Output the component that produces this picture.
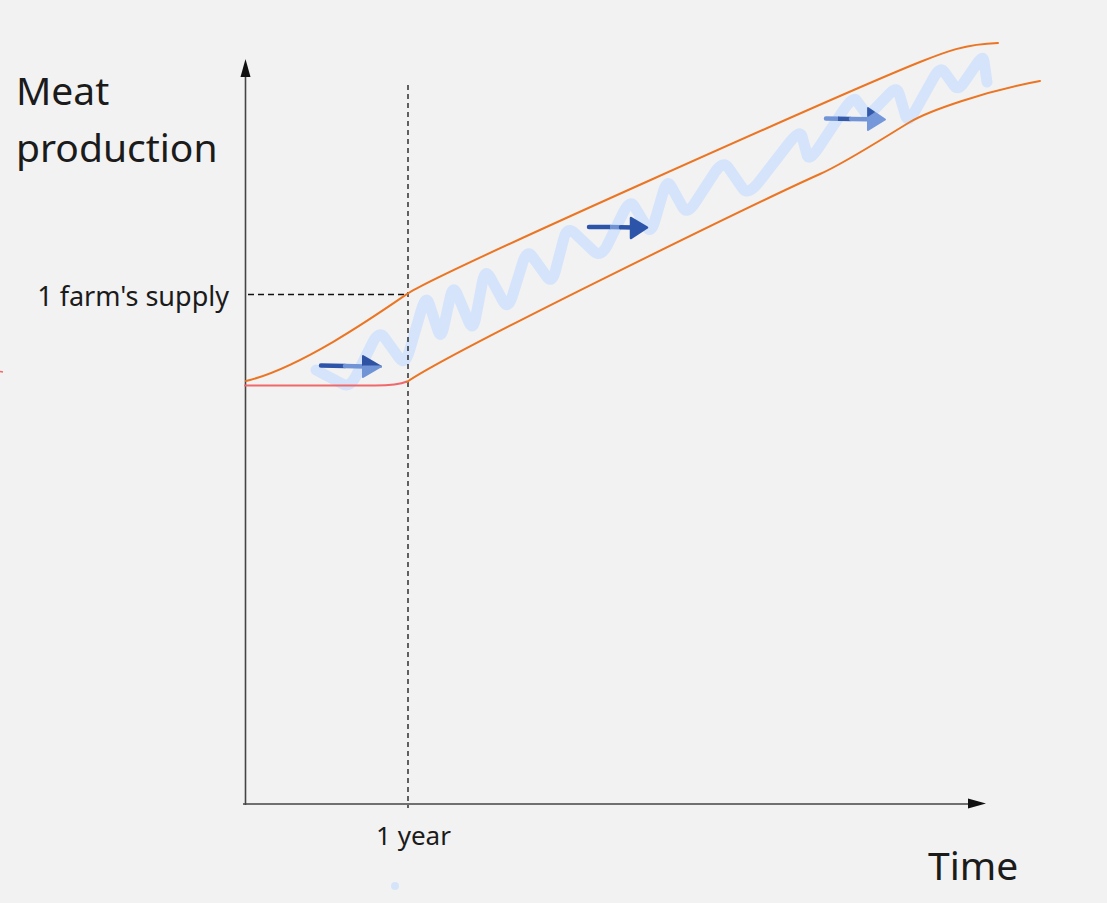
import React from "react";

type P = [number, number];

const squiggle: P[] = [
  [316, 370], [350, 388], [379, 330], [405, 366], [426, 294], [441, 340], [453, 284],
  [473, 332], [485, 268], [508, 310], [527, 249], [552, 284], [567, 226], [601, 258],
  [630, 199], [651, 234], [667, 179], [687, 215], [723, 160], [748, 196], [800, 129],
  [809, 162], [853, 96], [868, 116], [897, 86], [908, 124], [940, 66], [958, 91],
  [983, 55], [987, 82],
];

function rounded(pts: P[], f: number): string {
  let d = `M${pts[0][0]},${pts[0][1]}`;
  for (let i = 1; i < pts.length - 1; i++) {
    const a = pts[i - 1];
    const b = pts[i];
    const c = pts[i + 1];
    const s: P = [b[0] + (a[0] - b[0]) * f, b[1] + (a[1] - b[1]) * f];
    const e: P = [b[0] + (c[0] - b[0]) * f, b[1] + (c[1] - b[1]) * f];
    d += ` L${s[0].toFixed(1)},${s[1].toFixed(1)} Q${b[0]},${b[1]} ${e[0].toFixed(1)},${e[1].toFixed(1)}`;
  }
  const last = pts[pts.length - 1];
  d += ` L${last[0]},${last[1]}`;
  return d;
}

const SQUIGGLE = rounded(squiggle, 0.22);

const UPPER =
  "M246,381 C300,368 375,316 407,294 C437,273.3 860,86 920,62 C945,52 965,44 998,43";
const LOWER =
  "M407,382 C450,352 760,201 820,174 C845,163 885,137 910,122 C928,111.2 985,91 1040,81";

const DARK = "#2c55aa";
const LIGHT = "#7094d6";

export default function App() {
  return (
    <div className="relative w-[1107px] h-[903px] overflow-hidden bg-[#f2f2f2] font-['Noto_Sans',sans-serif] text-[#1b1b1b]">
      <svg className="absolute inset-0" width="1107" height="903" viewBox="0 0 1107 903">
        {/* squiggle */}
        <path
          d={SQUIGGLE}
          fill="none"
          stroke="#d5e4fb"
          strokeWidth="11"
          strokeLinecap="round"
          strokeLinejoin="round"
        />

        {/* dashed guides */}
        <line x1="408" y1="85" x2="408" y2="808" stroke="#111" strokeWidth="1.3" strokeDasharray="5 4" />
        <line x1="248" y1="294.5" x2="406" y2="294.5" stroke="#111" strokeWidth="1.3" strokeDasharray="6 4" />

        {/* axes */}
        <line x1="245.5" y1="805" x2="245.5" y2="72" stroke="#444" strokeWidth="1.6" />
        <polygon points="245.5,59 240.5,77 250.5,77" fill="#111" />
        <line x1="243" y1="804" x2="972" y2="804" stroke="#444" strokeWidth="1.6" />
        <polygon points="986,803.5 968,798.5 968,808.5" fill="#111" />

        {/* red baseline */}
        <path
          d="M245,385.5 L375,385.5 C392,385.5 400,384.5 407,381.5"
          fill="none"
          stroke="#f0686a"
          strokeWidth="2"
          strokeLinecap="round"
        />

        {/* orange curves */}
        <path d={UPPER} fill="none" stroke="#eb7523" strokeWidth="2" strokeLinecap="round" />
        <path d={LOWER} fill="none" stroke="#eb7523" strokeWidth="2" strokeLinecap="round" />

        {/* arrow 1 */}
        <line x1="321" y1="365.5" x2="345" y2="366" stroke={DARK} strokeWidth="4.5" strokeLinecap="round" />
        <line x1="345" y1="366" x2="366" y2="366.5" stroke={LIGHT} strokeWidth="4.5" strokeLinecap="round" />
        <polygon points="363,356 381,366.5 363,366.5" fill="#2f52a3" stroke="#2f52a3" strokeWidth="2" strokeLinejoin="round" />
        <polygon points="363,366.5 381,366.5 363,377" fill={LIGHT} stroke={LIGHT} strokeWidth="2" strokeLinejoin="round" />

        {/* arrow 2 */}
        <line x1="589" y1="227" x2="610" y2="227" stroke={DARK} strokeWidth="4.5" strokeLinecap="round" />
        <line x1="610" y1="227" x2="621" y2="227.3" stroke="#6f92d4" strokeWidth="4.5" />
        <line x1="621" y1="227.3" x2="634" y2="227.5" stroke={DARK} strokeWidth="4.5" strokeLinecap="round" />
        <polygon points="631,218 647,227.5 631,238" fill={DARK} stroke={DARK} strokeWidth="2.5" strokeLinejoin="round" />

        {/* arrow 3 */}
        <line x1="826" y1="118.5" x2="838" y2="118.7" stroke={LIGHT} strokeWidth="4.5" strokeLinecap="round" />
        <line x1="838" y1="118.7" x2="851" y2="118.9" stroke="#3559a9" strokeWidth="4.5" />
        <line x1="851" y1="118.9" x2="869" y2="119.2" stroke={LIGHT} strokeWidth="4.5" strokeLinecap="round" />
        <polygon points="868,108 885,119.5 868,130" fill="#7598da" stroke="#7598da" strokeWidth="2" strokeLinejoin="round" />
        <polygon points="868,108 874,112 868,116" fill="#3559a9" stroke="#3559a9" strokeWidth="1.5" strokeLinejoin="round" />

        {/* small marks */}
        <circle cx="395" cy="886" r="4" fill="#d6e4fa" />
        <line x1="0" y1="371.5" x2="3" y2="372" stroke="#f0686a" strokeWidth="1.5" />
      </svg>

      {/* labels */}
      <div className="absolute left-[16px] top-[61px] text-[39px] leading-[57px] whitespace-nowrap">
        Meat
        <br />
        production
      </div>
      <div className="absolute left-[34px] top-[282px] w-[195px] text-right text-[27px] leading-none whitespace-nowrap">
        1 farm's supply
      </div>
      <div className="absolute left-[376px] top-[822px] text-[26px] leading-none whitespace-nowrap">1 year</div>
      <div className="absolute left-[928px] top-[845px] text-[39px] leading-none whitespace-nowrap">Time</div>
    </div>
  );
}
